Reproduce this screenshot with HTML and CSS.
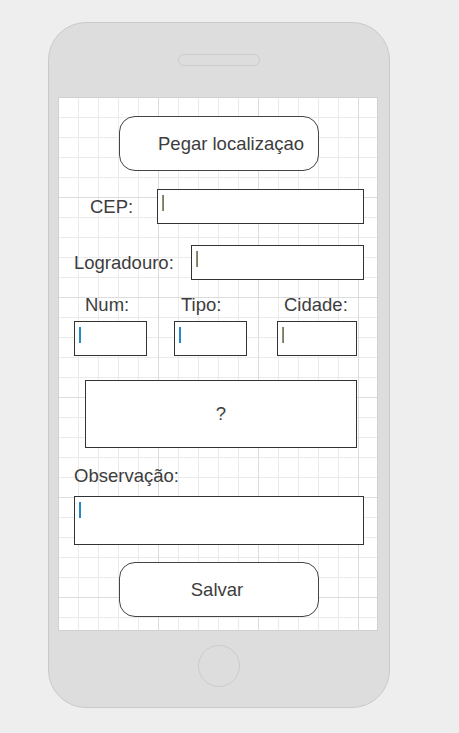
FILE: index.html
```html
<!DOCTYPE html>
<html lang="pt">
<head>
<meta charset="utf-8">
<title>Formulário de endereço</title>
<link rel="stylesheet" href="styles.css">
</head>
<body>
<div class="phone">
  <div class="phone-top"><div class="speaker"></div></div>
  <div class="screen">
    <div class="btn btn-locate">Pegar localizaçao</div>

    <div class="row row-cep">
      <span class="label label-cep">CEP:</span>
      <div class="input input-cep"><span class="caret caret-orange"></span></div>
    </div>

    <div class="row row-logradouro">
      <span class="label label-logradouro">Logradouro:</span>
      <div class="input input-logradouro"><span class="caret caret-orange"></span></div>
    </div>

    <div class="cols">
      <div class="col col-num">
        <span class="label col-label label-num">Num:</span>
        <div class="input input-num"><span class="caret caret-blue"></span></div>
      </div>
      <div class="col col-tipo">
        <span class="label col-label label-tipo">Tipo:</span>
        <div class="input input-tipo"><span class="caret caret-blue"></span></div>
      </div>
      <div class="col col-cidade">
        <span class="label col-label label-cidade">Cidade:</span>
        <div class="input input-cidade"><span class="caret caret-orange"></span></div>
      </div>
    </div>

    <div class="unknown-box">?</div>

    <span class="label label-obs">Observação:</span>
    <div class="input input-obs"><span class="caret caret-blue"></span></div>

    <div class="btn btn-save">Salvar</div>
  </div>
  <div class="phone-bottom"><div class="home"></div></div>
</div>
</body>
</html>
```

FILE: styles.css
```css
* { box-sizing: border-box; }

html, body {
  margin: 0;
  padding: 0;
  background: #eeeeee;
}

body {
  font-family: "Liberation Sans", Arial, sans-serif;
  font-size: 18.5px;
  color: #3d3d3d;
  width: 459px;
  height: 733px;
  overflow: hidden;
}

.phone {
  margin: 22px 0 0 48px;
  width: 342px;
  height: 686px;
  background: #dddddd;
  border: 1px solid #c9c9c9;
  border-radius: 38px;
  display: flex;
  flex-direction: column;
}

.phone-top {
  height: 74px;
  display: flex;
  justify-content: center;
  padding-top: 31px;
}

.speaker {
  width: 82px;
  height: 12px;
  border: 1px solid #cccccc;
  border-radius: 6px;
  background: #dddddd;
}

.screen {
  margin-left: 9px;
  width: 320px;
  height: 534px;
  border: 1px solid #d0d0d0;
  background-color: #ffffff;
  background-image:
    linear-gradient(to right, #dcdcdc 1px, transparent 1px),
    linear-gradient(to bottom, #dcdcdc 1px, transparent 1px),
    linear-gradient(to right, #ebebeb 1px, transparent 1px),
    linear-gradient(to bottom, #ebebeb 1px, transparent 1px);
  background-size: 100px 100px, 100px 100px, 20px 20px, 20px 20px;
  background-position: -1px -1px;
  display: flex;
  flex-direction: column;
  align-items: flex-start;
}

.phone-bottom {
  flex: 1;
  display: flex;
  justify-content: center;
  padding-top: 14px;
}

.home {
  width: 42px;
  height: 42px;
  border: 1px solid #cccccc;
  border-radius: 50%;
}

.label {
  line-height: 20px;
  white-space: nowrap;
}

.btn {
  width: 200px;
  height: 55px;
  border: 1px solid #444444;
  border-radius: 16px;
  background: #ffffff;
  display: flex;
  align-items: center;
  margin-left: 60px;
}

.btn-locate {
  margin-top: 18px;
  padding-left: 38px;
}

.btn-save {
  margin-top: 17px;
  justify-content: center;
  padding-right: 4px;
}

.input {
  height: 35px;
  border: 1px solid #333333;
  background: #ffffff;
  padding: 5px 0 0 4px;
}

.caret {
  display: block;
  width: 2px;
  height: 16px;
}

.caret-orange {
  background: linear-gradient(90deg, #c8861a 0, #c8861a 1.4px, #3a88c4 1.4px);
}

.caret-blue {
  background: linear-gradient(90deg, #c8861a 0, #c8861a 0.5px, #2389c9 0.5px);
}

.row {
  width: 100%;
  display: flex;
  align-items: center;
  padding-right: 13px;
}

.row .input { margin-left: auto; }

.row-cep { margin-top: 18px; }
.label-cep { margin-left: 31px; }
.input-cep { width: 207px; }

.row-logradouro { margin-top: 21px; }
.label-logradouro { margin-left: 15px; }
.input-logradouro { width: 173px; }

.cols {
  display: flex;
  margin-top: 15px;
  margin-left: 15px;
}

.col {
  display: flex;
  flex-direction: column;
}

.col-label { margin-bottom: 6px; }

.col-num { width: 73px; }
.label-num { padding-left: 11px; }
.input-num { width: 73px; }

.col-tipo { margin-left: 27px; width: 73px; }
.label-tipo { padding-left: 7px; }
.input-tipo { width: 73px; }

.col-cidade { margin-left: 30px; width: 80px; }
.label-cidade { padding-left: 7px; }
.input-cidade { width: 80px; }

.unknown-box {
  margin-top: 24px;
  margin-left: 26px;
  width: 272px;
  height: 68px;
  border: 1px solid #333333;
  background: #ffffff;
  display: flex;
  align-items: center;
  justify-content: center;
}

.label-obs {
  margin-top: 18px;
  margin-left: 15px;
}

.input-obs {
  margin-top: 10px;
  margin-left: 15px;
  width: 290px;
  height: 49px;
}
```
